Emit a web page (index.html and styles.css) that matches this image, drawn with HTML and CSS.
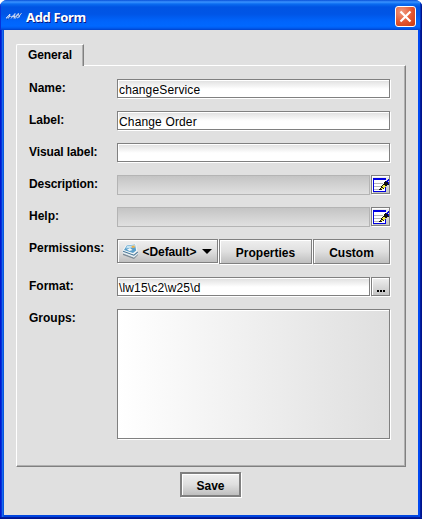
FILE: index.html
```html
<!DOCTYPE html>
<html lang="en">
<head>
<meta charset="utf-8">
<title>Add Form</title>
<link rel="stylesheet" href="styles.css">
</head>
<body>
<svg width="0" height="0" class="defs">
  <symbol id="edit" viewBox="0 0 17 17" shape-rendering="crispEdges">
    <path fill="#fff" d="M1 2h13v14H1z"/>
    <path fill="#0000e0" d="M1 2h13v2H1zM1 4h1v12H1zM1 15h13v1H1zM13 10h1v6h-1z"/>
    <path fill="#b8b8b8" d="M2 7h9v1H2zM2 10h7v1H2zM2 13h5v1H2z"/>
    <path fill="#111" d="M7 14v-1h1v-1h1v-2h1V9h1V8h1V6h1V5h2v1h1v1h1v2h-2v1h-1v1h-1v1h-1v1h-2v1z"/>
    <path fill="#f0e840" d="M9 12h1v-2h1V9h2v1h1v1h-1v1h-2v1H9z"/>
    <path fill="#111" d="M10 11h1v1h-1z"/>
    <path fill="#0000e0" d="M14 5h1V4h1V3h1v2h-1v1h-2zM16 6h1v2h-1z"/>
  </symbol>
</svg>
<div class="window">
  <header class="titlebar">
    <svg class="app" width="18" height="12" viewBox="0 0 18 12" fill="none"><path stroke="#123a8a" stroke-width=".9" d="M2 9.500l4-3M8 9l5-5M11 8l5-5"/><path stroke="#e8ecf8" stroke-width=".8" d="M1 8l4-4-1.500 4.500M1.500 8.500l3.500-2.500 2 1M6 8.500l4-5-1 5 4-5M7 6l3 1M10.500 8.500l3-5 .5 3 2.500-3.500M12 8l3-1.500"/></svg>
    <h1>Add Form</h1>
    <button class="close"><svg width="21" height="21" viewBox="0 0 21 21"><path d="M5.500 5.500l10 10M15.500 5.500l-10 10" stroke="#fff" stroke-width="2.200"/></svg></button>
  </header>
  <main>
    <div class="tab">General</div>
    <section class="panel">
      <div class="row"><label>Name:</label><div class="box field">changeService</div></div>
      <div class="row"><label>Label:</label><div class="box field">Change Order</div></div>
      <div class="row"><label class="tight">Visual label:</label><div class="box field"></div></div>
      <div class="row"><label class="tight">Description:</label><div class="box field off"></div><button class="box icon"><svg width="17" height="17"><use href="#edit"/></svg></button></div>
      <div class="row"><label>Help:</label><div class="box field off"></div><button class="box icon"><svg width="17" height="17"><use href="#edit"/></svg></button></div>
      <div class="row perms"><label>Permissions:</label>
        <button class="box btn default">
          <svg width="17" height="16" viewBox="0 0 17 16"><path fill="#7d8b96" d="M1 10l11 4.500 4-4v1.500l-4 4L1 12z"/><path fill="#e4eef3" d="M.5 8.500l11.500 4 4-3v1.500l-4 3.500L1 10.500z"/><path fill="#4a7898" d="M1 7l11 4.500 3.500-3 .5 1-4 3.300L1 8.800z"/><path fill="#f1f6f8" d="M.5 7.500L4 2l10-1.500L15.500 8l-4 3.500z"/><path fill="#5b9fca" d="M2 7l2.800-4.500L13 1.500l1.200 6L11 10z"/><path fill="#c6e3f1" d="M5 3l8-1 .4 2-9.400 1.500z"/><path fill="#eab04c" d="M9.500 3l3-.5.5 2-3 .5z"/><path fill="#eff8fa" d="M5 6.500l3-1.500 2.500 2-3 1z"/></svg>
          <span>&lt;Default&gt;</span><i class="arrow"></i>
        </button>
        <button class="box btn props"><span>Properties</span></button>
        <button class="box btn custom"><span>Custom</span></button>
      </div>
      <div class="row"><label>Format:</label><div class="box field format">\lw15\c2\w25\d</div><button class="box icon dots"><i></i><i></i><i></i></button></div>
      <div class="row groups"><label>Groups:</label><div class="box list"></div></div>
    </section>
    <button class="save"><span class="box btn">Save</span></button>
  </main>
</div>
</body>
</html>
```

FILE: styles.css
```css
* { box-sizing: border-box; }
body { margin: 0; background: #fff; font: bold 12px/14px "Liberation Sans", Arial, sans-serif; color: #000; }
.defs { position: absolute; }
button { font: inherit; color: inherit; padding: 0; border: 0; background: none; }

.window {
  width: 422px; height: 519px; padding: 0 4px 4px;
  border-radius: 7px 7px 0 0; overflow: hidden;
  background: linear-gradient(90deg, #0019cf 0 1px, #0831d9 1px 2px, #166aee 2px 3px, #0855dd 3px 4px, #0046e0 4px 418px, #0048f1 418px 420px, #001ea0 420px 421px, #00138c 421px);
  box-shadow: inset 0 -1px #00138c, inset 0 -2px #001ea0;
}
.titlebar {
  height: 30px; margin: 0 -4px; padding: 1px 6px 0 5px;
  display: flex; align-items: center;
  background: linear-gradient(#0850d8 0, #3a93ff 2px, #0a6cf0 4px, #0054e3 7px, #0055e6 14px, #0064fb 21px, #0068ff 26px, #005cf0 28px, #0042cc 30px);
  box-shadow: inset 1px 0 #0831d9, inset -1px 0 #00138c, inset -2px 0 #0036c0;
}
.app { margin-top: 1px; }
.titlebar h1 { margin: 2px auto 0 3px; font: bold 13px/16px "Noto Sans", sans-serif; letter-spacing: -.35px; color: #fff; text-shadow: 1px 1px #0a1883; }
.close {
  width: 21px; height: 21px; border: 1px solid #fff; border-radius: 3px; margin-top: 1px;
  background: radial-gradient(circle at 30% 25%, #f09a80, #e3552f 55%, #c53a10);
}
.close svg { display: block; margin: -1px; }

main { height: 485px; padding: 14px 12px 0; background: #e0e0e0; display: flex; flex-direction: column; align-items: flex-start; }
.tab {
  width: 68px; height: 22px; margin-bottom: -1px; padding: 3px 0 0 11px; letter-spacing: -.1px; position: relative;
  border: 1px solid #fff; border-right: 1px solid #808080; border-bottom: 0; border-radius: 2px 0 0 0;
  box-shadow: inset -1px 0 #b0b0b0;
  background: #e0e0e0;
}
.panel {
  width: 390px; height: 402px; padding: 13px 0 0 12px;
  border: 1px solid #fff; border-right: 1px solid #808080; border-bottom: 1px solid #808080;
  box-shadow: inset -1px -1px #b0b0b0;
}
.row { display: flex; height: 20px; margin-bottom: 12px; }
.row label { width: 88px; padding-top: 2px; white-space: nowrap; }
.row .tight { letter-spacing: -.1px; }
.box { border: 1px solid #808080; box-shadow: inset 1px 1px #fff, 1px 1px #fff; margin: 0 1px 1px 0; }
.field { width: 273px; padding: 3px 0 0 1px; font-weight: normal; background: linear-gradient(#dedede, #fff 9px); letter-spacing: .15px; }
.field:not(:last-child) { width: 253px; }
.off { height: 20px; border-color: #b4b4b4; box-shadow: none; background: linear-gradient(#c4c4c4, #e0e0e0); }
.icon { width: 19px; height: 19px; background: linear-gradient(#efefef, #c4c4c4); }
.icon svg { display: block; }
.btn { height: 25px; display: flex; align-items: center; justify-content: center; background: linear-gradient(#efefef, #dfdfdf 50%, #bfbfbf); }
.perms { height: 26px; }
.default { width: 101px; height: 24px; }
.default svg { position: relative; left: -1px; }
.btn > span { position: relative; top: 1px; }
.default > span { top: 0; margin: 1px 6px 0 3px; letter-spacing: -.1px; }
.arrow { border: 5px solid transparent; border-top-color: #000; border-bottom: 0; }
.props { width: 93px; }
.custom { width: 77px; }
.dots { display: flex; gap: 1px; justify-content: center; align-items: flex-end; padding-bottom: 3px; }
.dots i { width: 2px; height: 2px; background: #000; }
.groups { height: 131px; margin: 0; }
.list { width: 273px; background: linear-gradient(90deg, #fff, #dfdfdf); }
.save { width: 61px; height: 25px; margin: 5px 0 0 164px; border: 1px solid #808080; box-shadow: 1px 1px #fff; }
.save .btn { width: 59px; height: 23px; margin: 0; padding-top: 2px; box-shadow: inset 1px 1px #fff; }
```
